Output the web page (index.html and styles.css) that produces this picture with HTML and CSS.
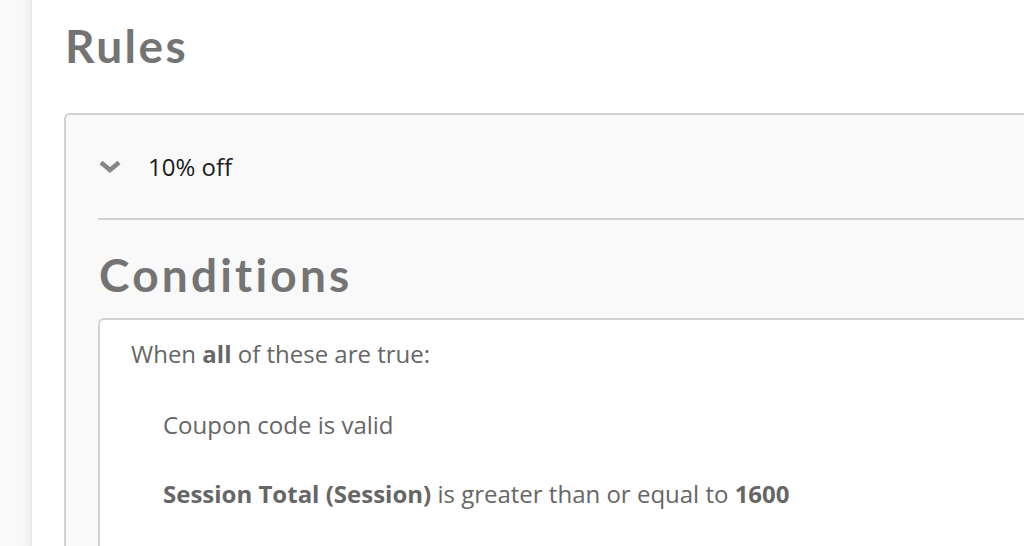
FILE: index.html
```html
<!DOCTYPE html>
<html>
<head>
<meta charset="utf-8">
<link rel="stylesheet" href="styles.css">
</head>
<body>
<div class="layout">
  <aside class="sidebar"></aside>
  <main class="main">
    <h1 class="page-title">Rules</h1>
    <section class="rule-card">
      <div class="rule-header">
        <svg class="chevron" width="22" height="13" viewBox="0 0 22 13"><path d="M2 2.5 L11 10 L20 2.5" fill="none" stroke="#868686" stroke-width="4.6"/></svg>
        <span class="rule-name">10% off</span>
      </div>
      <h2 class="section-title">Conditions</h2>
      <div class="conditions">
        <p class="cond-intro">When <b>all</b> of these are true:</p>
        <p class="cond-item">Coupon code is valid</p>
        <p class="cond-item"><b>Session Total (Session)</b> is greater than or equal to <b>1600</b></p>
      </div>
    </section>
  </main>
</div>
</body>
</html>
```

FILE: styles.css
```css
html, body {
  margin: 0;
  padding: 0;
  background: #ffffff;
  height: 100%;
  overflow: hidden;
}
.layout {
  display: flex;
  height: 546px;
  overflow: hidden;
}
.sidebar {
  width: 32px;
  flex: none;
  background: linear-gradient(to right, #f9f9f9 0, #f9f9f9 22px, #ececec 31px, #e4e4e4 32px);
}
.main {
  flex: 1;
  padding-left: 32px;
  min-width: 0;
  overflow: hidden;
}
.page-title {
  font-family: "Lato", sans-serif;
  font-weight: 700;
  font-size: 46px;
  letter-spacing: 2.5px;
  color: #747474;
  margin: 0;
  padding-top: 18px;
  line-height: 56px;
  height: 113px;
  padding-left: 1px;
  box-sizing: border-box;
}
.rule-card {
  border: 2px solid #d2d2d2;
  border-right: none;
  border-radius: 6px 0 0 6px;
  background: #f9f9f9;
  padding-left: 32px;
  height: 600px;
}
.rule-header {
  display: flex;
  align-items: center;
  height: 103px;
  border-bottom: 2px solid #d2d2d2;
}
.chevron {
  margin-left: 1px;
  margin-right: 27px;
  flex: none;
}
.rule-name {
  font-family: "Open Sans", sans-serif;
  font-size: 24px;
  color: #1b1b1b;
}
.section-title {
  font-family: "Lato", sans-serif;
  font-weight: 700;
  font-size: 46px;
  letter-spacing: 3.2px;
  color: #747474;
  margin: 0;
  padding-top: 27px;
  line-height: 56px;
  height: 98px;
  box-sizing: border-box;
  padding-left: 1px;
}
.conditions {
  border: 2px solid #d2d2d2;
  border-right: none;
  border-radius: 6px 0 0 6px;
  background: #ffffff;
  padding: 18px 0 0 31px;
  height: 400px;
  font-family: "Open Sans", sans-serif;
  font-size: 24px;
  color: #666666;
}
.conditions p {
  margin: 0 0 37px 0;
  line-height: 32px;
  white-space: nowrap;
}
.conditions .cond-intro {
  margin-bottom: 39px;
}
.cond-item {
  padding-left: 32px;
}
.conditions b {
  font-weight: 700;
}
```
